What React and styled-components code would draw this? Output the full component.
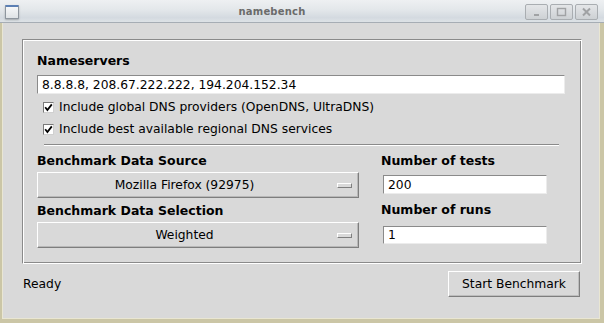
import React from "react";
import styled, { createGlobalStyle } from "styled-components";

const GlobalStyle = createGlobalStyle`
  html, body {
    margin: 0;
    padding: 0;
    background: #d9d9d9;
  }
  body {
    font-family: "DejaVu Sans", "Liberation Sans", sans-serif;
    font-size: 12.3px;
    color: #000;
  }
`;

const Window = styled.div`
  width: 604px;
  height: 323px;
  display: flex;
  flex-direction: column;
  box-sizing: border-box;
  background: #d9d9d9;
  overflow: hidden;
`;

const TitleBar = styled.div`
  height: 22px;
  flex: none;
  display: flex;
  align-items: center;
  padding: 0 6px 0 5px;
  background: linear-gradient(#eef0f2 0%, #e3e7ea 45%, #d4dae0 80%, #dde2e6 100%);
  border-bottom: 1px solid #a6adb4;
`;

const AppIcon = styled.div`
  width: 12px;
  height: 11px;
  border: 1px solid #8e969e;
  border-top: 2px solid #5b7fb4;
  border-radius: 1px;
  background: linear-gradient(#f6f7f8, #dfe3e6);
  box-shadow: 0 1px 2px rgba(0, 0, 0, 0.25);
  margin-top: 1px;
`;

const Title = styled.div`
  flex: 1;
  text-align: center;
  font-weight: bold;
  font-size: 10px;
  color: #6b6b6b;
  letter-spacing: 0.2px;
`;

const WinButtons = styled.div`
  display: flex;
  gap: 2px;
  margin-top: 2px;
`;

const WinButton = styled.div`
  width: 21px;
  height: 14px;
  border: 1px solid #a9adb1;
  border-radius: 2px;
  background: linear-gradient(#e4e6e8, #cdd1d4);
  display: flex;
  align-items: center;
  justify-content: center;
`;

const Frame = styled.div`
  flex: 1;
  display: flex;
  flex-direction: column;
  border-left: 2px solid #cbc6a6;
  border-right: 4px solid #cbc6a6;
  border-bottom: 4px solid #cbc6a6;
  box-shadow: inset 1px 0 0 #e9e6d2, inset -1px -1px 0 #e9e6d2;
`;

const GroupBox = styled.div`
  margin: 16px 18px 0 20px;
  height: 225px;
  box-sizing: border-box;
  border: 1px solid;
  border-color: #8a8a8a #fff #fff #8a8a8a;
  box-shadow: inset 1px 1px 0 #fff, inset -1px -1px 0 #8a8a8a;
  padding: 13px 16px 0 14px;
  display: flex;
  flex-direction: column;
`;

const Label = styled.div`
  font-weight: bold;
  font-size: 12.5px;
  line-height: 16px;
  height: 16px;
  margin-top: ${({ $mt }) => $mt || 0}px;
`;

const TextInput = styled.div`
  box-sizing: border-box;
  height: ${({ $h }) => $h}px;
  width: ${({ $w }) => ($w ? `${$w}px` : "auto")};
  margin-top: ${({ $mt }) => $mt}px;
  margin-left: ${({ $ml }) => $ml || 0}px;
  background: #fff;
  border: 1px solid;
  border-color: #8a8a8a #ececec #ececec #8a8a8a;
  padding: 0 4px;
  display: flex;
  align-items: center;
  font-size: 12.3px;
  white-space: nowrap;
`;

const CheckList = styled.div`
  display: flex;
  flex-direction: column;
  margin-top: 2px;
  padding-left: 6px;
`;

const CheckRow = styled.label`
  height: 22px;
  display: flex;
  align-items: center;
  gap: 5px;
  font-size: 12.3px;
`;

const Box = styled.span`
  width: 9px;
  height: 9px;
  background: #fff;
  border: 1px solid;
  border-color: #7a7a7a #d0d0d0 #d0d0d0 #7a7a7a;
  display: flex;
  align-items: center;
  justify-content: center;
`;

const Separator = styled.div`
  margin: 4px 6px 0 7px;
  height: 1px;
  background: #8a8a8a;
  border-bottom: 1px solid #fff;
`;

const Columns = styled.div`
  display: grid;
  grid-template-columns: 322px 166px;
  column-gap: 22px;
  margin-top: 7px;
`;

const Column = styled.div`
  display: flex;
  flex-direction: column;
`;

const Dropdown = styled.div`
  box-sizing: border-box;
  height: 26px;
  margin-top: ${({ $mt }) => $mt}px;
  border: 1px solid;
  border-color: #fff #7e7e7e #7e7e7e #fff;
  box-shadow: inset -1px -1px 0 #b8b8b8;
  display: flex;
  align-items: center;
  padding-right: 6px;
`;

const DropText = styled.div`
  flex: 1;
  text-align: center;
  font-size: 12.3px;
  margin-right: 6px;
`;

const Indicator = styled.div`
  width: 13px;
  height: 3px;
  border: 1px solid;
  border-color: #fff #7e7e7e #7e7e7e #fff;
  background: #d9d9d9;
`;

const BottomBar = styled.div`
  flex: 1;
  display: flex;
  align-items: center;
  justify-content: space-between;
  padding: 0 20px 16px 21px;
`;

const Status = styled.div`
  font-size: 12.3px;
`;

const Button = styled.div`
  box-sizing: border-box;
  width: 132px;
  height: 26px;
  border: 1px solid;
  border-color: #fff #7e7e7e #7e7e7e #fff;
  box-shadow: inset -1px -1px 0 #bdbdbd;
  display: flex;
  align-items: center;
  justify-content: center;
  font-size: 12.3px;
`;

const Check = () => (
  <Box>
    <svg width="9" height="9" viewBox="0 0 9 9">
      <polyline points="1.2,4.3 3.4,7 7.8,1.4" fill="none" stroke="#000" strokeWidth="1.8" />
    </svg>
  </Box>
);

const Glyph = ({ kind }) => (
  <svg width="11" height="10" viewBox="0 0 11 10">
    {kind === "min" && <rect x="3" y="7" width="5" height="2" fill="#a0a2a4" />}
    {kind === "max" && (
      <rect x="1.5" y="1.5" width="8" height="7" fill="none" stroke="#a0a2a4" strokeWidth="1.4" />
    )}
    {kind === "close" && (
      <path d="M2 1.5 L9 8.5 M9 1.5 L2 8.5" stroke="#a0a2a4" strokeWidth="2" />
    )}
  </svg>
);

export default function App() {
  return (
    <>
      <GlobalStyle />
      <Window>
        <TitleBar>
          <AppIcon />
          <Title>namebench</Title>
          <WinButtons>
            <WinButton><Glyph kind="min" /></WinButton>
            <WinButton><Glyph kind="max" /></WinButton>
            <WinButton><Glyph kind="close" /></WinButton>
          </WinButtons>
        </TitleBar>
        <Frame>
          <GroupBox>
            <Label>Nameservers</Label>
            <TextInput $h={19} $mt={6}>
              8.8.8.8, 208.67.222.222, 194.204.152.34
            </TextInput>
            <CheckList>
              <CheckRow>
                <Check />
                Include global DNS providers (OpenDNS, UltraDNS)
              </CheckRow>
              <CheckRow>
                <Check />
                Include best available regional DNS services
              </CheckRow>
            </CheckList>
            <Separator />
            <Columns>
              <Column>
                <Label>Benchmark Data Source</Label>
                <Dropdown $mt={3}>
                  <DropText>Mozilla Firefox (92975)</DropText>
                  <Indicator />
                </Dropdown>
                <Label $mt={5}>Benchmark Data Selection</Label>
                <Dropdown $mt={3}>
                  <DropText>Weighted</DropText>
                  <Indicator />
                </Dropdown>
              </Column>
              <Column>
                <Label>Number of tests</Label>
                <TextInput $h={19} $mt={6} $ml={2} $w={164}>200</TextInput>
                <Label $mt={8}>Number of runs</Label>
                <TextInput $h={18} $mt={8} $ml={2} $w={164}>1</TextInput>
              </Column>
            </Columns>
          </GroupBox>
          <BottomBar>
            <Status>Ready</Status>
            <Button>Start Benchmark</Button>
          </BottomBar>
        </Frame>
      </Window>
    </>
  );
}
